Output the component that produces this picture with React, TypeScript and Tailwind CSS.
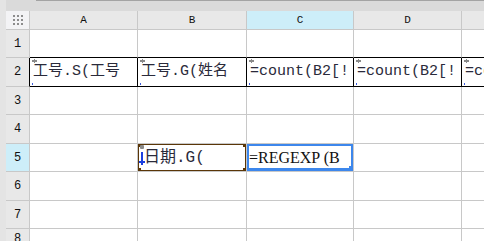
import React from "react";

const cols = [108, 109, 107, 108, 108];
const rowHeights = [28, 29, 28, 29, 28, 29, 28, 20];
const letters = ["A", "B", "C", "D", "E"];

const cjk = '"Liberation Mono", "Noto Sans CJK SC", monospace';

function Marker() {
  return (
    <div className="absolute left-[2px] top-[1px] w-[5px] h-[6px] flex flex-col items-center">
      <div className="w-[1px] h-[4px] bg-[#8a8a8a]" />
      <div className="w-[5px] h-[2px] bg-[#8a8a8a] -mt-[3px]" />
    </div>
  );
}

export default function App() {
  return (
    <div className="w-[484px] h-[241px] overflow-hidden flex bg-white">
      <div className="w-[6px] h-full bg-[#e4e4e4] shrink-0" />
      <div className="flex-1 flex flex-col min-w-0 overflow-hidden">
        {/* top strip */}
        <div className="h-[11px] bg-[#dadada] flex shrink-0">
          <div className="w-[30px] shrink-0" />
          <div className="flex-1 h-[1px] bg-[#a3a3a3]" />
        </div>
        {/* header row */}
        <div className="h-[19px] flex shrink-0 bg-[#e8e8e8]">
          <div className="w-[24px] shrink-0 h-full bg-[#f3f3f5] border-r border-[#c8c8c8] border-b flex items-center justify-center">
            <div className="grid grid-cols-3 gap-[2px]">
              {Array.from({ length: 9 }).map((_, i) => (
                <div key={i} className="w-[2px] h-[2px] bg-[#8c8c8c]" />
              ))}
            </div>
          </div>
          {letters.map((l, i) => (
            <div
              key={l}
              className={`h-full flex items-center justify-center border-r border-b border-[#c8c8c8] text-[11px] text-[#111] shrink-0 ${
                i === 2 ? "bg-[#cdeef9]" : "bg-[#e8e8e8]"
              }`}
              style={{ width: cols[i], fontFamily: '"Liberation Mono", monospace' }}
            >
              {l}
            </div>
          ))}
        </div>
        {rowHeights.map((h, r) => {
          const rowNum = r + 1;
          const isRow2 = rowNum === 2;
          const isRow1 = rowNum === 1;
          return (
            <div key={r} className="flex shrink-0" style={{ height: h }}>
              <div
                className={`w-[24px] shrink-0 h-full flex items-center justify-center text-[12px] text-[#111] border-b border-[#c8c8c8] border-r ${
                  rowNum === 5 ? "bg-[#cdeef9]" : "bg-[#e8e8e8]"
                } ${isRow2 ? "border-r-black" : ""}`}
                style={{ fontFamily: '"Liberation Mono", monospace' }}
              >
                {rowNum}
              </div>
              {letters.map((l, c) => {
                const w = cols[c];
                let content: React.ReactNode = null;
                let extra = "border-[#c8c8c8]";
                if (isRow1) extra = "border-[#c8c8c8] border-b-black";
                if (isRow2) {
                  extra = "border-black";
                  const txt =
                    c === 0
                      ? "工号.S(工号"
                      : c === 1
                      ? "工号.G(姓名"
                      : "=count(B2[!";
                  content = (
                    <>
                      <Marker />
                      <div
                        className="pl-[3px] pt-[3px] text-[15px] leading-[22px] text-[#2a2a3a] whitespace-nowrap"
                        style={{ fontFamily: cjk }}
                      >
                        {txt}
                      </div>
                      <div className="absolute left-[2px] bottom-[1px] w-[1px] h-[2px] bg-[#3b5bdb]" />
                    </>
                  );
                }
                if (rowNum === 5 && c === 1) {
                  content = (
                    <>
                      <div className="absolute inset-0 border border-[#5a3608]" />
                      <div className="absolute left-0 top-0 w-[3px] h-[3px] bg-[#5a3608]" />
                      <div className="absolute left-0 bottom-0 w-[3px] h-[3px] bg-[#5a3608]" />
                      <div className="absolute right-0 bottom-0 w-[3px] h-[3px] bg-[#5a3608]" />
                      <div className="absolute right-0 top-0 w-[3px] h-[3px] bg-[#5a3608]" />
                      <div className="absolute left-[2px] top-[1px] w-[4px] h-[4px] bg-[#8a8a8a] rounded-[1px]" />
                      <div className="absolute left-[3px] top-[8px] w-[2px] h-[13px] bg-[#1a3fe0]" />
                      <div className="absolute left-[1px] top-[17px] w-[6px] h-[2px] bg-[#1a3fe0]" />
                      <div
                        className="pl-[6px] pt-[1px] text-[16px] leading-[26px] text-[#2a2a3a] whitespace-nowrap"
                        style={{ fontFamily: cjk }}
                      >
                        日期.G(
                      </div>
                    </>
                  );
                }
                if (rowNum === 5 && c === 2) {
                  content = (
                    <>
                      <div className="absolute -left-[1px] -top-[1px] -right-[1px] bottom-0 border-[3px] border-[#3d87ec]" />
                      <div className="absolute -right-[1px] -bottom-[0px] w-[5px] h-[5px] bg-[#3d87ec]" />
                      <div
                        className="pl-[2px] pt-[2px] text-[16px] leading-[24px] text-[#111] whitespace-nowrap"
                        style={{ fontFamily: '"Liberation Serif", serif' }}
                      >
                        =REGEXP (B
                      </div>
                    </>
                  );
                }
                return (
                  <div
                    key={l}
                    className={`relative h-full shrink-0 border-r border-b ${extra}`}
                    style={{ width: w }}
                  >
                    <div className="absolute inset-0 overflow-hidden">{content}</div>
                  </div>
                );
              })}
            </div>
          );
        })}
      </div>
    </div>
  );
}
